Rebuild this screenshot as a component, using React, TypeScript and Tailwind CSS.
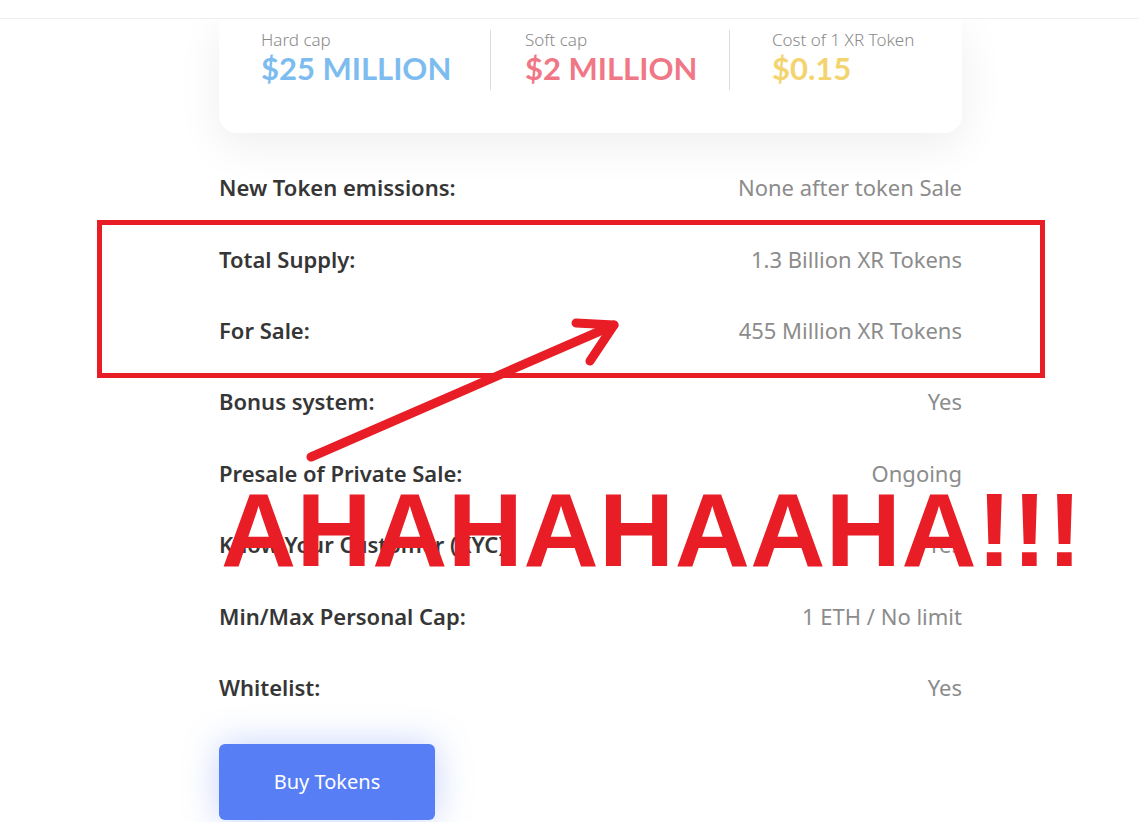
import React from "react";

const rows = [
  { label: "New Token emissions:", value: "None after token Sale" },
  { label: "Total Supply:", value: "1.3 Billion XR Tokens" },
  { label: "For Sale:", value: "455 Million XR Tokens" },
  { label: "Bonus system:", value: "Yes" },
  { label: "Presale of Private Sale:", value: "Ongoing" },
  { label: "Know Your Customer (KYC):", value: "Yes" },
  { label: "Min/Max Personal Cap:", value: "1 ETH / No limit" },
  { label: "Whitelist:", value: "Yes" },
];

const stats = [
  { label: "Hard cap", value: "$25 MILLION", color: "text-[#7dbcef]" },
  { label: "Soft cap", value: "$2 MILLION", color: "text-[#f07786]" },
  { label: "Cost of 1 XR Token", value: "$0.15", color: "text-[#f3d46f]" },
];

export default function App() {
  return (
    <div className="relative min-h-screen w-full overflow-hidden bg-white font-['Noto_Sans','Lato',sans-serif]">
      {/* top bar */}
      <div className="relative z-10 h-[19px] border-b border-[#efefef] bg-white" />

      <div className="ml-[219px] w-[743px]">
        {/* caps card */}
        <div className="flex h-[114px] items-start rounded-b-[18px] bg-white pt-[11px] shadow-[0_12px_45px_rgba(0,0,0,0.07)]">
          {stats.map((s, i) => (
            <div
              key={s.label}
              className={`flex h-[60px] items-start ${i === 0 ? "w-[271px] pl-[42px]" : i === 1 ? "w-[239px] border-l border-[#dcdcdc] pl-[34px]" : "border-l border-[#dcdcdc] pl-[42px]"}`}
            >
              <div>
                <div className="text-[17px] leading-[20px] font-light text-[#8a8a8a]">{s.label}</div>
                <div className={`font-['Lato',sans-serif] text-[31px] leading-[36px] font-bold ${s.color}`}>{s.value}</div>
              </div>
            </div>
          ))}
        </div>

        {/* details */}
        <div className="mt-[19px]">
          {rows.map((r) => (
            <div key={r.label} className="flex h-[71.4px] items-center justify-between text-[22px]">
              <span className="font-semibold text-[#363636]">{r.label}</span>
              <span className="text-[#8c8c8c]">{r.value}</span>
            </div>
          ))}
        </div>

        <button className="mt-[21px] flex h-[76px] w-[216px] items-center justify-center rounded-[6px] bg-[#587ef6] text-[20px] text-white shadow-[0_0_35px_rgba(88,126,246,0.35)]">
          Buy Tokens
        </button>
      </div>

      {/* red markup overlay */}
      <div className="absolute left-[97px] top-[220px] h-[158px] w-[948px] border-[5px] border-[#e81d25]" />

      <svg className="absolute left-0 top-0" width="1139" height="822" viewBox="0 0 1139 822">
        <g stroke="#e81d25" strokeWidth="9" strokeLinecap="round" strokeLinejoin="round" fill="none">
          <path d="M311 457 L614 325" />
          <path d="M576 323 L614 325 L590 361" />
        </g>
      </svg>

      <div className="absolute left-[221px] top-[478px] whitespace-nowrap font-['Liberation_Sans',Arial,sans-serif] text-[104px] leading-none font-bold tracking-[0.5px] text-[#e81d25]">
        AHAHAHAAHA!!!
      </div>
    </div>
  );
}
